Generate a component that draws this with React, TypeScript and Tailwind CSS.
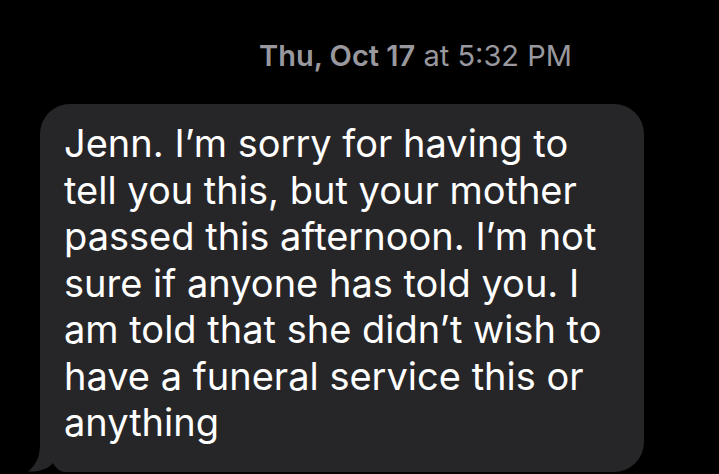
import React from "react";

const lines = [
  "Jenn. I’m sorry for having to",
  "tell you this, but your mother",
  "passed this afternoon. I’m not",
  "sure if anyone has told you. I",
  "am told that she didn’t wish to",
  "have a funeral service this or",
  "anything",
];

export default function App() {
  return (
    <div
      className="w-[719px] h-[474px] bg-black overflow-hidden flex flex-col"
      style={{ fontFamily: "Inter, 'Liberation Sans', sans-serif" }}
    >
      <div className="pt-[38px] pl-[259px] text-[29px] leading-[36px] text-[#98989e] whitespace-nowrap">
        <span className="font-semibold">Thu, Oct 17</span> at 5:32 PM
      </div>
      <div className="relative ml-[40px] mt-[30px] w-[604px] bg-[#262628] rounded-[30px] rounded-bl-none pt-[16px] pb-[26px] pl-[24px] text-white text-[38px] leading-[46.5px]">
        <svg
          className="absolute left-[-14px] bottom-0"
          width="64"
          height="44"
          viewBox="0 0 64 44"
        >
          <rect x="0" y="0" width="64" height="44" fill="#000" />
          <path
            d="M14 0 L64 0 L64 44 L38 44 C33 43 29 39 27 35 C22 41 14 44 2 43.5 C9 38 14 30 14 16 Z"
            fill="#262628"
          />
        </svg>
        {lines.map((l, i) => (
          <div key={i} className="relative whitespace-nowrap">{l}</div>
        ))}
      </div>
    </div>
  );
}
